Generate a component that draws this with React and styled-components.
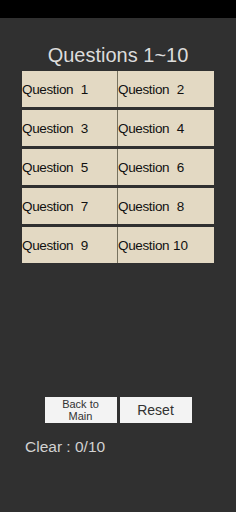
import React from "react";
import styled, { createGlobalStyle } from "styled-components";

const GlobalStyle = createGlobalStyle`
  body {
    margin: 0;
    background: #303030;
    font-family: "Liberation Sans", Arial, sans-serif;
  }
`;

const Screen = styled.div`
  width: 236px;
  min-height: 512px;
  background: #303030;
  display: flex;
  flex-direction: column;
`;

const StatusBar = styled.div`
  height: 18px;
  background: #000;
`;

const Title = styled.h1`
  margin: 26px 0 4px;
  font-size: 20px;
  line-height: 23px;
  font-weight: 400;
  color: #dcdcdc;
  text-align: center;
`;

const Grid = styled.div`
  display: grid;
  grid-template-columns: 96px 96px;
  grid-auto-rows: 36px;
  row-gap: 3px;
  margin-left: 22px;
`;

const Cell = styled.button`
  display: flex;
  align-items: center;
  margin: 0;
  padding: 0;
  border: none;
  border-right: ${(p) => (p.$left ? "1.5px solid #77725f" : "none")};
  background: #e3d9c3;
  font-family: inherit;
  font-size: 13.5px;
  color: #111;
  white-space: pre;
  text-align: left;
`;

const Label = styled.span`
  letter-spacing: -0.35px;
`;

const Actions = styled.div`
  display: flex;
  justify-content: center;
  gap: 3px;
  margin-top: 134px;
`;

const ActionButton = styled.button`
  width: 72px;
  height: 26px;
  margin: 0;
  padding: 0;
  border: none;
  background: #f3f3f3;
  color: #323232;
  font-family: inherit;
  font-size: ${(p) => (p.$small ? "11px" : "14px")};
  line-height: ${(p) => (p.$small ? "12.5px" : "26px")};
`;

const ClearText = styled.div`
  margin: 15px 0 0 25px;
  font-size: 15.5px;
  color: #d2d2d2;
`;

const questions = Array.from({ length: 10 }, (_, i) => i + 1);

const App = () => {
  return (
    <Screen>
      <GlobalStyle />
      <StatusBar />
      <Title>Questions 1~10</Title>
      <Grid>
        {questions.map((n) => (
          <Cell key={n} $left={n % 2 === 1}>
            <Label>Question</Label>
            {n < 10 ? `  ${n}` : ` ${n}`}
          </Cell>
        ))}
      </Grid>
      <Actions>
        <ActionButton $small>
          Back to
          <br />
          Main
        </ActionButton>
        <ActionButton>Reset</ActionButton>
      </Actions>
      <ClearText>Clear : 0/10</ClearText>
    </Screen>
  );
};

export default App;
